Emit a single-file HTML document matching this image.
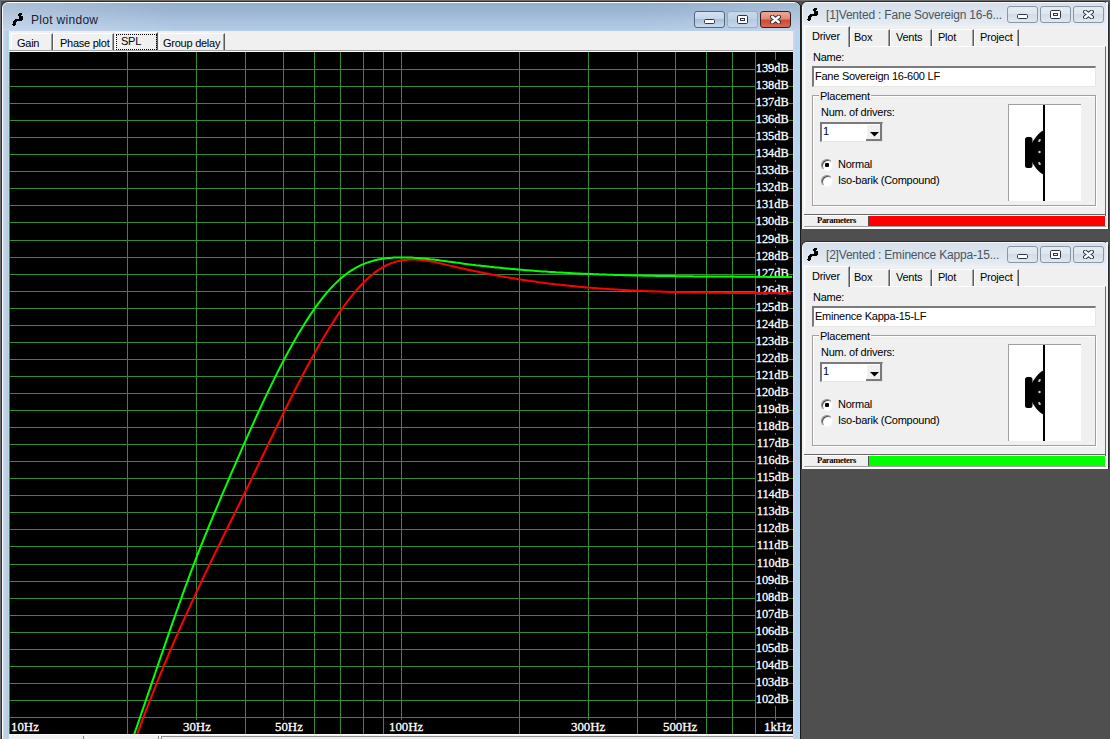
<!DOCTYPE html>
<html><head><meta charset="utf-8"><style>
html,body{margin:0;padding:0}
body{width:1110px;height:739px;position:relative;overflow:hidden;background:#4f4f4f;font-family:"Liberation Sans",sans-serif}
div{box-sizing:border-box}
.lb{position:absolute;font-family:"Liberation Serif",serif;font-size:13px;line-height:15px;color:#fff;white-space:nowrap;-webkit-text-stroke:0.3px #fff;transform:scaleX(0.95);transform-origin:0 0}
.lb.r{transform-origin:100% 0}
.lb.hz{transform:scaleX(0.99)}
.ttl{position:absolute;font-size:12px;line-height:16px;white-space:nowrap;letter-spacing:-0.15px}
.txt{position:absolute;font-size:11px;line-height:13px;color:#000;white-space:nowrap;letter-spacing:-0.25px}
.par{position:absolute;font-family:"Liberation Serif",serif;font-weight:bold;font-size:8.5px;letter-spacing:-0.3px;line-height:11px;color:#000;white-space:nowrap}
.tab{position:absolute;background:#f0f0f0;border-top:1px solid #fff;border-left:1px solid #fff;border-right:1px solid #5a5a5a;box-shadow:inset -1px 0 0 #a0a0a0}
.tab span{position:absolute;font-size:11px;line-height:13px;white-space:nowrap;color:#000;letter-spacing:-0.25px}
.tbtn{position:absolute;width:31px;height:17px;border:1px solid #56647a;border-radius:3px}
.tbtn.in{border-color:#8a96a6;background:linear-gradient(#e4ebf3,#dde5ee 50%,#d2dce8 50%,#dfe8f2)}
.gl{position:absolute}
.gmin{position:absolute;left:10px;top:8px;width:11px;height:5px;border:1px solid #333;border-radius:1px;background:#fff}
.gmax{position:absolute;left:10px;top:4px;width:11px;height:9px;border:2px solid #333;border-radius:1px;background:#fff;box-shadow:inset 0 0 0 2px #fff}
.gx{position:absolute;left:0;top:0;width:29px;text-align:center;font-size:11px;line-height:15px;color:#fff;text-shadow:0 0 1px #333,0 0 1px #333}
.radio{position:absolute;width:12px;height:12px;border-radius:50%;background:#fff;border:1px solid;border-color:#8a8a8a #f8f8f8 #f8f8f8 #8a8a8a;box-shadow:inset 1px 1px 0 #505050}
.radio .dot{position:absolute;left:3px;top:3px;width:4px;height:4px;border-radius:1px;background:#000}
</style></head><body>
<div style="position:absolute;left:0;top:0;width:1110px;height:1px;background:#6e6e6e"></div>
<div style="position:absolute;left:0;top:0;width:1px;height:739px;background:#6a6e78"></div>
<!-- left window -->
<div style="position:absolute;left:1px;top:1px;width:800px;height:760px;background:#2a2a2a;border-radius:7px 7px 0 0"></div>
<div style="position:absolute;left:2px;top:2px;width:798px;height:758px;background:#fff;border-radius:6px 6px 0 0"></div>
<div style="position:absolute;left:3px;top:3px;width:797px;height:757px;background:#bcd2ea;border-radius:5px 5px 0 0"></div>
<div style="position:absolute;left:3px;top:31px;width:6px;height:708px;background:linear-gradient(90deg,#c8dce4,#bcd0e6 40%,#b8ccec 80%,#aee4d8)"></div>
<div style="position:absolute;left:793px;top:31px;width:7px;height:708px;background:linear-gradient(90deg,#c8dcea,#c0d0ee 40%,#b4d4f2 70%,#a0e4f8)"></div>
<div style="position:absolute;left:3px;top:3px;width:797px;height:28px;background:linear-gradient(90deg,rgba(255,255,255,0.22),rgba(255,255,255,0) 22%,rgba(255,255,255,0) 80%,rgba(255,255,255,0.15)),linear-gradient(#93afcd,#9bb5d2 30%,#a6bed9 55%,#aec8e4 85%,#b8cde6);border-radius:5px 5px 0 0"></div>
<svg width="12" height="13" style="position:absolute;left:12px;top:13px" shape-rendering="crispEdges" fill="#000"><rect x="7" y="0" width="3" height="1"/><rect x="6" y="1" width="4" height="1"/><rect x="6" y="2" width="3" height="1"/><rect x="7" y="3" width="4" height="1"/><rect x="7" y="4" width="4" height="1"/><rect x="7" y="5" width="4" height="1"/><rect x="3" y="6" width="8" height="1"/><rect x="2" y="7" width="8" height="1"/><rect x="1" y="8" width="4" height="1"/><rect x="1" y="9" width="3" height="1"/><rect x="1" y="10" width="3" height="1"/><rect x="0" y="11" width="4" height="1"/><rect x="1" y="12" width="2" height="1"/></svg>
<div class="ttl" style="left:31px;top:12px;color:#1c2030;letter-spacing:0.3px">Plot window</div>
<div class="tbtn" style="left:694px;top:11px;background:linear-gradient(#d4e1f0,#c5d6ea 45%,#a9bfd8 50%,#c7daf0)"><svg class="gl" style="left:9px;top:7px" width="11" height="5"><rect x="0.5" y="0.5" width="10" height="4" rx="1" fill="#fff" stroke="#2e3440"/></svg></div>
<div class="tbtn" style="left:727px;top:11px;border-color:#98a8be;background:linear-gradient(#c8d8ea,#bfd1e6 50%,#b5c9e0 50%,#c5d9ee)"><svg class="gl" style="left:9px;top:3px" width="11" height="9"><rect x="0.5" y="0.5" width="10" height="8" rx="1.2" fill="#fff" stroke="#2e3440"/><rect x="3.5" y="3.5" width="4" height="2" fill="#fff" stroke="#2e3440"/></svg></div>
<div class="tbtn" style="left:760px;top:11px;border-color:#3a1a1a;background:linear-gradient(#eba898,#e08870 48%,#c94a32 52%,#d86a50)"><svg class="gl" style="left:9px;top:3px" width="11" height="9"><path d="M2.2 1.8 L8.8 7.2 M8.8 1.8 L2.2 7.2" stroke="#2e3440" stroke-width="4.4" stroke-linecap="round"/><path d="M2.2 1.8 L8.8 7.2 M8.8 1.8 L2.2 7.2" stroke="#fff" stroke-width="2.4" stroke-linecap="round"/></svg></div>
<div style="position:absolute;left:9px;top:31px;width:784px;height:708px;background:#f0f0f0"></div>
<div class="tab" style="left:11px;top:33px;width:42px;height:17px"><span style="left:5px;top:3px">Gain</span></div>
<div class="tab" style="left:53px;top:33px;width:61px;height:17px"><span style="left:6px;top:3px">Phase plot</span></div>
<div class="tab" style="left:115px;top:32px;width:43px;height:19px"><span style="left:5px;top:2px">SPL</span><div style="position:absolute;left:0;top:1px;width:41px;height:16px;border:1px dotted #000"></div></div>
<div class="tab" style="left:159px;top:33px;width:66px;height:17px"><span style="left:3px;top:3px">Group delay</span></div>
<div style="position:absolute;left:9px;top:50px;width:784px;height:1px;background:#a0a0a0"></div>
<div style="position:absolute;left:9px;top:51px;width:784px;height:1px;background:#fff"></div>
<svg width="1110" height="739" style="position:absolute;left:0;top:0" shape-rendering="crispEdges"><rect x="9" y="52" width="784" height="682" fill="#000"/><rect x="9" y="52" width="1" height="682" fill="#348c34"/><rect x="127" y="52" width="1" height="682" fill="#348c34"/><rect x="196" y="52" width="1" height="682" fill="#348c34"/><rect x="245" y="52" width="1" height="682" fill="#348c34"/><rect x="283" y="52" width="1" height="682" fill="#348c34"/><rect x="314" y="52" width="1" height="682" fill="#348c34"/><rect x="340" y="52" width="1" height="682" fill="#348c34"/><rect x="363" y="52" width="1" height="682" fill="#348c34"/><rect x="383" y="52" width="1" height="682" fill="#348c34"/><rect x="401" y="52" width="1" height="682" fill="#348c34"/><rect x="519" y="52" width="1" height="682" fill="#348c34"/><rect x="588" y="52" width="1" height="682" fill="#348c34"/><rect x="637" y="52" width="1" height="682" fill="#348c34"/><rect x="675" y="52" width="1" height="682" fill="#348c34"/><rect x="706" y="52" width="1" height="682" fill="#348c34"/><rect x="732" y="52" width="1" height="682" fill="#348c34"/><rect x="755" y="52" width="1" height="682" fill="#348c34"/><rect x="775" y="52" width="1" height="682" fill="#348c34"/><rect x="9" y="69" width="784" height="1" fill="#348c34"/><rect x="9" y="86" width="784" height="1" fill="#348c34"/><rect x="9" y="103" width="784" height="1" fill="#348c34"/><rect x="9" y="120" width="784" height="1" fill="#348c34"/><rect x="9" y="137" width="784" height="1" fill="#348c34"/><rect x="9" y="154" width="784" height="1" fill="#348c34"/><rect x="9" y="171" width="784" height="1" fill="#348c34"/><rect x="9" y="188" width="784" height="1" fill="#348c34"/><rect x="9" y="205" width="784" height="1" fill="#348c34"/><rect x="9" y="222" width="784" height="1" fill="#348c34"/><rect x="9" y="240" width="784" height="1" fill="#348c34"/><rect x="9" y="257" width="784" height="1" fill="#348c34"/><rect x="9" y="274" width="784" height="1" fill="#348c34"/><rect x="9" y="291" width="784" height="1" fill="#348c34"/><rect x="9" y="308" width="784" height="1" fill="#348c34"/><rect x="9" y="325" width="784" height="1" fill="#348c34"/><rect x="9" y="342" width="784" height="1" fill="#348c34"/><rect x="9" y="359" width="784" height="1" fill="#348c34"/><rect x="9" y="376" width="784" height="1" fill="#348c34"/><rect x="9" y="393" width="784" height="1" fill="#348c34"/><rect x="9" y="410" width="784" height="1" fill="#348c34"/><rect x="9" y="427" width="784" height="1" fill="#348c34"/><rect x="9" y="444" width="784" height="1" fill="#348c34"/><rect x="9" y="461" width="784" height="1" fill="#348c34"/><rect x="9" y="478" width="784" height="1" fill="#348c34"/><rect x="9" y="495" width="784" height="1" fill="#348c34"/><rect x="9" y="512" width="784" height="1" fill="#348c34"/><rect x="9" y="529" width="784" height="1" fill="#348c34"/><rect x="9" y="546" width="784" height="1" fill="#348c34"/><rect x="9" y="564" width="784" height="1" fill="#348c34"/><rect x="9" y="581" width="784" height="1" fill="#348c34"/><rect x="9" y="598" width="784" height="1" fill="#348c34"/><rect x="9" y="615" width="784" height="1" fill="#348c34"/><rect x="9" y="632" width="784" height="1" fill="#348c34"/><rect x="9" y="649" width="784" height="1" fill="#348c34"/><rect x="9" y="666" width="784" height="1" fill="#348c34"/><rect x="9" y="683" width="784" height="1" fill="#348c34"/><rect x="9" y="700" width="784" height="1" fill="#348c34"/><rect x="9" y="717" width="784" height="1" fill="#348c34"/><rect x="756" y="60" width="33" height="15" fill="#000"/><rect x="756" y="77" width="33" height="15" fill="#000"/><rect x="756" y="94" width="33" height="15" fill="#000"/><rect x="756" y="111" width="33" height="15" fill="#000"/><rect x="756" y="128" width="33" height="15" fill="#000"/><rect x="756" y="145" width="33" height="15" fill="#000"/><rect x="756" y="162" width="33" height="15" fill="#000"/><rect x="756" y="179" width="33" height="15" fill="#000"/><rect x="756" y="196" width="33" height="15" fill="#000"/><rect x="756" y="213" width="33" height="15" fill="#000"/><rect x="756" y="231" width="33" height="15" fill="#000"/><rect x="756" y="248" width="33" height="15" fill="#000"/><rect x="756" y="265" width="33" height="15" fill="#000"/><rect x="756" y="282" width="33" height="15" fill="#000"/><rect x="756" y="299" width="33" height="15" fill="#000"/><rect x="756" y="316" width="33" height="15" fill="#000"/><rect x="756" y="333" width="33" height="15" fill="#000"/><rect x="756" y="350" width="33" height="15" fill="#000"/><rect x="756" y="367" width="33" height="15" fill="#000"/><rect x="756" y="384" width="33" height="15" fill="#000"/><rect x="756" y="401" width="33" height="15" fill="#000"/><rect x="756" y="418" width="33" height="15" fill="#000"/><rect x="756" y="435" width="33" height="15" fill="#000"/><rect x="756" y="452" width="33" height="15" fill="#000"/><rect x="756" y="469" width="33" height="15" fill="#000"/><rect x="756" y="486" width="33" height="15" fill="#000"/><rect x="756" y="503" width="33" height="15" fill="#000"/><rect x="756" y="520" width="33" height="15" fill="#000"/><rect x="756" y="537" width="33" height="15" fill="#000"/><rect x="756" y="555" width="33" height="15" fill="#000"/><rect x="756" y="572" width="33" height="15" fill="#000"/><rect x="756" y="589" width="33" height="15" fill="#000"/><rect x="756" y="606" width="33" height="15" fill="#000"/><rect x="756" y="623" width="33" height="15" fill="#000"/><rect x="756" y="640" width="33" height="15" fill="#000"/><rect x="756" y="657" width="33" height="15" fill="#000"/><rect x="756" y="674" width="33" height="15" fill="#000"/><rect x="756" y="691" width="33" height="15" fill="#000"/><rect x="10" y="720" width="28" height="14" fill="#000"/><rect x="183" y="720" width="28" height="14" fill="#000"/><rect x="274" y="720" width="28" height="14" fill="#000"/><rect x="388" y="720" width="34" height="14" fill="#000"/><rect x="570" y="720" width="34" height="14" fill="#000"/><rect x="662" y="720" width="34" height="14" fill="#000"/><rect x="763" y="720" width="28" height="14" fill="#000"/></svg>
<div class="lb r" style="top:60px;right:321px">139dB</div><div class="lb r" style="top:77px;right:321px">138dB</div><div class="lb r" style="top:94px;right:321px">137dB</div><div class="lb r" style="top:111px;right:321px">136dB</div><div class="lb r" style="top:128px;right:321px">135dB</div><div class="lb r" style="top:145px;right:321px">134dB</div><div class="lb r" style="top:162px;right:321px">133dB</div><div class="lb r" style="top:179px;right:321px">132dB</div><div class="lb r" style="top:196px;right:321px">131dB</div><div class="lb r" style="top:213px;right:321px">130dB</div><div class="lb r" style="top:231px;right:321px">129dB</div><div class="lb r" style="top:248px;right:321px">128dB</div><div class="lb r" style="top:265px;right:321px">127dB</div><div class="lb r" style="top:282px;right:321px">126dB</div><div class="lb r" style="top:299px;right:321px">125dB</div><div class="lb r" style="top:316px;right:321px">124dB</div><div class="lb r" style="top:333px;right:321px">123dB</div><div class="lb r" style="top:350px;right:321px">122dB</div><div class="lb r" style="top:367px;right:321px">121dB</div><div class="lb r" style="top:384px;right:321px">120dB</div><div class="lb r" style="top:401px;right:321px">119dB</div><div class="lb r" style="top:418px;right:321px">118dB</div><div class="lb r" style="top:435px;right:321px">117dB</div><div class="lb r" style="top:452px;right:321px">116dB</div><div class="lb r" style="top:469px;right:321px">115dB</div><div class="lb r" style="top:486px;right:321px">114dB</div><div class="lb r" style="top:503px;right:321px">113dB</div><div class="lb r" style="top:520px;right:321px">112dB</div><div class="lb r" style="top:537px;right:321px">111dB</div><div class="lb r" style="top:555px;right:321px">110dB</div><div class="lb r" style="top:572px;right:321px">109dB</div><div class="lb r" style="top:589px;right:321px">108dB</div><div class="lb r" style="top:606px;right:321px">107dB</div><div class="lb r" style="top:623px;right:321px">106dB</div><div class="lb r" style="top:640px;right:321px">105dB</div><div class="lb r" style="top:657px;right:321px">104dB</div><div class="lb r" style="top:674px;right:321px">103dB</div><div class="lb r" style="top:691px;right:321px">102dB</div><div class="lb hz" style="top:719px;left:11.0px">10Hz</div><div class="lb hz" style="top:719px;left:183.3px">30Hz</div><div class="lb hz" style="top:719px;left:274.5px">50Hz</div><div class="lb hz" style="top:719px;left:388.8px">100Hz</div><div class="lb hz" style="top:719px;left:570.5px">300Hz</div><div class="lb hz" style="top:719px;left:662.6px">500Hz</div><div class="lb hz" style="top:719px;left:763.8px">1kHz</div>
<svg width="1110" height="739" style="position:absolute;left:0;top:0">
<defs><clipPath id="pc"><rect x="9" y="52" width="784" height="682"/></clipPath></defs>
<g clip-path="url(#pc)" fill="none" stroke-width="2" stroke-linejoin="round">
<polyline points="135.0,740.3 137.0,734.8 139.0,729.3 141.0,723.9 143.0,718.5 145.0,713.2 147.0,708.0 149.0,702.8 151.0,697.7 153.0,692.6 155.0,687.5 157.0,682.5 159.0,677.6 161.0,672.7 163.0,667.8 165.0,663.0 167.0,658.3 169.0,653.5 171.0,648.9 173.0,644.2 175.0,639.6 177.0,635.0 179.0,630.5 181.0,626.0 183.0,621.5 185.0,617.1 187.0,612.7 189.0,608.3 191.0,603.9 193.0,599.6 195.0,595.3 197.0,591.0 199.0,586.8 201.0,582.5 203.0,578.3 205.0,574.1 207.0,569.9 209.0,565.8 211.0,561.6 213.0,557.5 215.0,553.4 217.0,549.3 219.0,545.2 221.0,541.1 223.0,537.0 225.0,532.9 227.0,528.8 229.0,524.8 231.0,520.7 233.0,516.7 235.0,512.6 237.0,508.5 239.0,504.5 241.0,500.4 243.0,496.3 245.0,492.3 247.0,488.2 249.0,484.1 251.0,480.0 253.0,475.9 255.0,471.8 257.0,467.6 259.0,463.5 261.0,459.4 263.0,455.2 265.0,451.1 267.0,446.9 269.0,442.8 271.0,438.7 273.0,434.5 275.0,430.4 277.0,426.3 279.0,422.2 281.0,418.1 283.0,414.0 285.0,410.0 287.0,406.0 289.0,401.9 291.0,397.9 293.0,394.0 295.0,390.0 297.0,386.1 299.0,382.2 301.0,378.4 303.0,374.5 305.0,370.7 307.0,367.0 309.0,363.3 311.0,359.6 313.0,355.9 315.0,352.3 317.0,348.8 319.0,345.3 321.0,341.8 323.0,338.4 325.0,335.1 327.0,331.8 329.0,328.5 331.0,325.3 333.0,322.2 335.0,319.1 337.0,316.1 339.0,313.1 341.0,310.2 343.0,307.4 345.0,304.6 347.0,302.0 349.0,299.3 351.0,296.8 353.0,294.3 355.0,291.9 357.0,289.6 359.0,287.3 361.0,285.2 363.0,283.1 365.0,281.1 367.0,279.2 369.0,277.3 371.0,275.6 373.0,274.0 375.0,272.4 377.0,270.9 379.0,269.5 381.0,268.3 383.0,267.1 385.0,266.0 387.0,265.0 389.0,264.1 391.0,263.3 393.0,262.6 395.0,262.0 397.0,261.4 399.0,260.9 401.0,260.5 403.0,260.2 405.0,259.9 407.0,259.8 409.0,259.6 411.0,259.6 413.0,259.5 415.0,259.6 417.0,259.7 419.0,259.8 421.0,260.0 423.0,260.2 425.0,260.5 427.0,260.8 429.0,261.1 431.0,261.4 433.0,261.8 435.0,262.2 437.0,262.6 439.0,263.1 441.0,263.5 443.0,264.0 445.0,264.5 447.0,264.9 449.0,265.4 451.0,265.9 453.0,266.3 455.0,266.8 457.0,267.3 459.0,267.7 461.0,268.2 463.0,268.6 465.0,269.0 467.0,269.5 469.0,269.9 471.0,270.3 473.0,270.8 475.0,271.2 477.0,271.6 479.0,272.0 481.0,272.4 483.0,272.8 485.0,273.2 487.0,273.6 489.0,274.0 491.0,274.4 493.0,274.8 495.0,275.1 497.0,275.5 499.0,275.9 501.0,276.2 503.0,276.6 505.0,276.9 507.0,277.3 509.0,277.6 511.0,278.0 513.0,278.3 515.0,278.6 517.0,278.9 519.0,279.3 521.0,279.6 523.0,279.9 525.0,280.2 527.0,280.5 529.0,280.8 531.0,281.1 533.0,281.3 535.0,281.6 537.0,281.9 539.0,282.2 541.0,282.4 543.0,282.7 545.0,283.0 547.0,283.2 549.0,283.5 551.0,283.7 553.0,283.9 555.0,284.2 557.0,284.4 559.0,284.6 561.0,284.9 563.0,285.1 565.0,285.3 567.0,285.5 569.0,285.7 571.0,285.9 573.0,286.1 575.0,286.3 577.0,286.5 579.0,286.7 581.0,286.9 583.0,287.0 585.0,287.2 587.0,287.4 589.0,287.6 591.0,287.7 593.0,287.9 595.0,288.0 597.0,288.2 599.0,288.4 601.0,288.5 603.0,288.7 605.0,288.8 607.0,288.9 609.0,289.1 611.0,289.2 613.0,289.3 615.0,289.5 617.0,289.6 619.0,289.7 621.0,289.8 623.0,289.9 625.0,290.0 627.0,290.2 629.0,290.3 631.0,290.4 633.0,290.5 635.0,290.6 637.0,290.7 639.0,290.7 641.0,290.8 643.0,290.9 645.0,291.0 647.0,291.1 649.0,291.2 651.0,291.3 653.0,291.3 655.0,291.4 657.0,291.5 659.0,291.5 661.0,291.6 663.0,291.7 665.0,291.7 667.0,291.8 669.0,291.9 671.0,291.9 673.0,292.0 675.0,292.0 677.0,292.1 679.0,292.1 681.0,292.2 683.0,292.2 685.0,292.3 687.0,292.3 689.0,292.3 691.0,292.4 693.0,292.4 695.0,292.5 697.0,292.5 699.0,292.5 701.0,292.6 703.0,292.6 705.0,292.6 707.0,292.6 709.0,292.7 711.0,292.7 713.0,292.7 715.0,292.7 717.0,292.8 719.0,292.8 721.0,292.8 723.0,292.8 725.0,292.8 727.0,292.9 729.0,292.9 731.0,292.9 733.0,292.9 735.0,292.9 737.0,292.9 739.0,293.0 741.0,293.0 743.0,293.0 745.0,293.0 747.0,293.0 749.0,293.0 751.0,293.0 753.0,293.0 755.0,293.0 757.0,293.1 759.0,293.1 761.0,293.1 763.0,293.1 765.0,293.1 767.0,293.1 769.0,293.1 771.0,293.1 773.0,293.1 775.0,293.1 777.0,293.1 779.0,293.2 781.0,293.2 783.0,293.2 785.0,293.2 787.0,293.2 789.0,293.2 791.0,293.2" stroke="#ff0000"/>
<polyline points="132.0,740.6 134.0,734.8 136.0,729.1 138.0,723.3 140.0,717.5 142.0,711.7 144.0,705.8 146.0,700.0 148.0,694.1 150.0,688.3 152.0,682.4 154.0,676.6 156.0,670.7 158.0,664.9 160.0,659.0 162.0,653.2 164.0,647.4 166.0,641.6 168.0,635.9 170.0,630.1 172.0,624.4 174.0,618.7 176.0,613.0 178.0,607.4 180.0,601.8 182.0,596.2 184.0,590.7 186.0,585.2 188.0,579.8 190.0,574.4 192.0,569.1 194.0,563.8 196.0,558.6 198.0,553.4 200.0,548.3 202.0,543.3 204.0,538.3 206.0,533.3 208.0,528.5 210.0,523.6 212.0,518.8 214.0,514.0 216.0,509.3 218.0,504.6 220.0,499.8 222.0,495.1 224.0,490.4 226.0,485.8 228.0,481.1 230.0,476.4 232.0,471.7 234.0,467.1 236.0,462.5 238.0,457.9 240.0,453.3 242.0,448.7 244.0,444.1 246.0,439.6 248.0,435.1 250.0,430.6 252.0,426.2 254.0,421.8 256.0,417.4 258.0,413.0 260.0,408.7 262.0,404.4 264.0,400.1 266.0,395.9 268.0,391.7 270.0,387.6 272.0,383.5 274.0,379.4 276.0,375.4 278.0,371.4 280.0,367.5 282.0,363.6 284.0,359.8 286.0,356.0 288.0,352.3 290.0,348.7 292.0,345.1 294.0,341.5 296.0,338.0 298.0,334.6 300.0,331.2 302.0,327.9 304.0,324.7 306.0,321.5 308.0,318.4 310.0,315.4 312.0,312.4 314.0,309.5 316.0,306.7 318.0,303.9 320.0,301.3 322.0,298.7 324.0,296.2 326.0,293.7 328.0,291.4 330.0,289.1 332.0,287.0 334.0,284.9 336.0,282.9 338.0,281.0 340.0,279.1 342.0,277.4 344.0,275.8 346.0,274.2 348.0,272.7 350.0,271.4 352.0,270.1 354.0,268.8 356.0,267.7 358.0,266.6 360.0,265.6 362.0,264.7 364.0,263.9 366.0,263.1 368.0,262.4 370.0,261.7 372.0,261.1 374.0,260.5 376.0,260.0 378.0,259.6 380.0,259.2 382.0,258.8 384.0,258.5 386.0,258.3 388.0,258.0 390.0,257.9 392.0,257.7 394.0,257.6 396.0,257.5 398.0,257.4 400.0,257.4 402.0,257.4 404.0,257.4 406.0,257.4 408.0,257.5 410.0,257.6 412.0,257.6 414.0,257.8 416.0,257.9 418.0,258.0 420.0,258.2 422.0,258.4 424.0,258.5 426.0,258.7 428.0,258.9 430.0,259.2 432.0,259.4 434.0,259.6 436.0,259.9 438.0,260.1 440.0,260.4 442.0,260.7 444.0,260.9 446.0,261.2 448.0,261.5 450.0,261.7 452.0,262.0 454.0,262.3 456.0,262.6 458.0,262.8 460.0,263.1 462.0,263.4 464.0,263.7 466.0,263.9 468.0,264.2 470.0,264.4 472.0,264.7 474.0,264.9 476.0,265.2 478.0,265.4 480.0,265.6 482.0,265.9 484.0,266.1 486.0,266.3 488.0,266.5 490.0,266.8 492.0,267.0 494.0,267.2 496.0,267.4 498.0,267.6 500.0,267.8 502.0,268.0 504.0,268.2 506.0,268.4 508.0,268.6 510.0,268.8 512.0,269.0 514.0,269.1 516.0,269.3 518.0,269.5 520.0,269.7 522.0,269.8 524.0,270.0 526.0,270.2 528.0,270.3 530.0,270.5 532.0,270.6 534.0,270.8 536.0,270.9 538.0,271.1 540.0,271.2 542.0,271.4 544.0,271.5 546.0,271.6 548.0,271.8 550.0,271.9 552.0,272.0 554.0,272.1 556.0,272.3 558.0,272.4 560.0,272.5 562.0,272.6 564.0,272.7 566.0,272.8 568.0,273.0 570.0,273.1 572.0,273.2 574.0,273.3 576.0,273.4 578.0,273.5 580.0,273.6 582.0,273.7 584.0,273.7 586.0,273.8 588.0,273.9 590.0,274.0 592.0,274.1 594.0,274.2 596.0,274.3 598.0,274.3 600.0,274.4 602.0,274.5 604.0,274.6 606.0,274.6 608.0,274.7 610.0,274.8 612.0,274.8 614.0,274.9 616.0,274.9 618.0,275.0 620.0,275.1 622.0,275.1 624.0,275.2 626.0,275.2 628.0,275.3 630.0,275.3 632.0,275.4 634.0,275.4 636.0,275.5 638.0,275.5 640.0,275.6 642.0,275.6 644.0,275.7 646.0,275.7 648.0,275.7 650.0,275.8 652.0,275.8 654.0,275.8 656.0,275.9 658.0,275.9 660.0,275.9 662.0,276.0 664.0,276.0 666.0,276.0 668.0,276.1 670.0,276.1 672.0,276.1 674.0,276.1 676.0,276.2 678.0,276.2 680.0,276.2 682.0,276.2 684.0,276.3 686.0,276.3 688.0,276.3 690.0,276.3 692.0,276.3 694.0,276.4 696.0,276.4 698.0,276.4 700.0,276.4 702.0,276.4 704.0,276.4 706.0,276.5 708.0,276.5 710.0,276.5 712.0,276.5 714.0,276.5 716.0,276.5 718.0,276.5 720.0,276.6 722.0,276.6 724.0,276.6 726.0,276.6 728.0,276.6 730.0,276.6 732.0,276.6 734.0,276.6 736.0,276.7 738.0,276.7 740.0,276.7 742.0,276.7 744.0,276.7 746.0,276.7 748.0,276.7 750.0,276.7 752.0,276.8 754.0,276.8 756.0,276.8 758.0,276.8 760.0,276.8 762.0,276.8 764.0,276.8 766.0,276.8 768.0,276.9 770.0,276.9 772.0,276.9 774.0,276.9 776.0,276.9 778.0,276.9 780.0,277.0 782.0,277.0 784.0,277.0 786.0,277.0 788.0,277.0 790.0,277.1 792.0,277.1" stroke="#00ff00"/>
</g></svg>
<div style="position:absolute;left:9px;top:734px;width:784px;height:1px;background:#fff"></div>
<div style="position:absolute;left:83px;top:736px;width:1px;height:3px;background:#888"></div>
<div style="position:absolute;left:86px;top:736px;width:1px;height:3px;background:#fff"></div>
<div style="position:absolute;left:158px;top:736px;width:1px;height:3px;background:#888"></div>
<div style="position:absolute;left:161px;top:736px;width:632px;height:3px;border-top:1px solid #909090;border-left:1px solid #909090"></div>
<div style="position:absolute;left:800px;top:5px;width:1px;height:734px;background:#1a1a1a"></div>

<div style="position:absolute;left:801px;top:1px;width:308px;height:228px;background:#2a2a2a;border-radius:6px 6px 0 0"></div>
<div style="position:absolute;left:802px;top:2px;width:306px;height:227px;background:#f6f8fb;border-radius:5px 5px 0 0"></div>
<div style="position:absolute;left:803px;top:3px;width:304px;height:226px;background:#e4eaf1;border-radius:4px 4px 0 0"></div>
<div style="position:absolute;left:803px;top:3px;width:304px;height:23px;background:linear-gradient(#d7e0ea,#dce4ee 50%,#e3eaf2 85%,#eaf0f6);border-radius:4px 4px 0 0"></div>
<svg width="12" height="13" style="position:absolute;left:807px;top:8px" shape-rendering="crispEdges" fill="#000"><rect x="7" y="0" width="3" height="1"/><rect x="6" y="1" width="4" height="1"/><rect x="6" y="2" width="3" height="1"/><rect x="7" y="3" width="4" height="1"/><rect x="7" y="4" width="4" height="1"/><rect x="7" y="5" width="4" height="1"/><rect x="3" y="6" width="8" height="1"/><rect x="2" y="7" width="8" height="1"/><rect x="1" y="8" width="4" height="1"/><rect x="1" y="9" width="3" height="1"/><rect x="1" y="10" width="3" height="1"/><rect x="0" y="11" width="4" height="1"/><rect x="1" y="12" width="2" height="1"/></svg>
<div class="ttl" style="left:826px;top:7px;color:#4a5562;letter-spacing:-0.2px">[1]Vented : Fane Sovereign 16-6...</div>
<div class="tbtn in" style="left:1007px;top:6px"><svg class="gl" style="left:9px;top:7px" width="11" height="5"><rect x="0.5" y="0.5" width="10" height="4" rx="1" fill="#fff" stroke="#2e3440"/></svg></div>
<div class="tbtn in" style="left:1040px;top:6px"><svg class="gl" style="left:9px;top:3px" width="11" height="9"><rect x="0.5" y="0.5" width="10" height="8" rx="1.2" fill="#fff" stroke="#2e3440"/><rect x="3.5" y="3.5" width="4" height="2" fill="#fff" stroke="#2e3440"/></svg></div>
<div class="tbtn in" style="left:1073px;top:6px"><svg class="gl" style="left:9px;top:3px" width="11" height="9"><path d="M2.2 1.8 L8.8 7.2 M8.8 1.8 L2.2 7.2" stroke="#2e3440" stroke-width="4.4" stroke-linecap="round"/><path d="M2.2 1.8 L8.8 7.2 M8.8 1.8 L2.2 7.2" stroke="#fff" stroke-width="2.4" stroke-linecap="round"/></svg></div>
<div style="position:absolute;left:804px;top:26px;width:302px;height:203px;background:#f0f0f0"></div>
<div style="position:absolute;left:1106px;top:2px;width:2px;height:227px;background:#eef2f6"></div>
<div style="position:absolute;left:802px;top:26px;width:2px;height:203px;background:#eef2f6"></div>
<div style="position:absolute;left:802px;top:227px;width:306px;height:2px;background:#fafafa"></div>
<!-- tab page -->
<div style="position:absolute;left:804px;top:46px;width:301px;height:168px;border-top:1px solid #fff;border-left:1px solid #fff;border-right:1px solid #696969;border-bottom:1px solid #696969;box-sizing:border-box;width:302px;height:170px"></div>
<div class="tab sel" style="left:804px;top:26px;width:46px;height:21px"><span style="left:7px;top:3px">Driver</span></div>
<div class="tab" style="left:850px;top:29px;width:40px;height:17px"><span style="left:3px;top:1px">Box</span></div>
<div class="tab" style="left:890px;top:29px;width:42px;height:17px"><span style="left:5px;top:1px">Vents</span></div>
<div class="tab" style="left:932px;top:29px;width:42px;height:17px"><span style="left:5px;top:1px">Plot</span></div>
<div class="tab" style="left:974px;top:29px;width:45px;height:17px"><span style="left:5px;top:1px">Project</span></div>
<div class="txt" style="left:813px;top:51px">Name:</div>
<div style="position:absolute;left:812px;top:66px;width:284px;height:21px;background:#fff;border-top:2px solid #7a7a7a;border-left:2px solid #7a7a7a;border-right:1px solid #e6e6e6;border-bottom:1px solid #e6e6e6;box-sizing:border-box"></div>
<div class="txt" style="left:815px;top:70px">Fane Sovereign 16-600 LF</div>
<div style="position:absolute;left:812px;top:95px;width:284px;height:111px;border:1px solid #a0a0a0;box-shadow:inset 1px 1px 0 #fff,1px 1px 0 #fff;box-sizing:border-box"></div>
<div class="txt" style="left:819px;top:90px;background:#f0f0f0;padding:0 1px">Placement</div>
<div class="txt" style="left:821px;top:106px">Num. of drivers:</div>
<div style="position:absolute;left:820px;top:122px;width:63px;height:20px;background:#fff;border-top:2px solid #7a7a7a;border-left:2px solid #7a7a7a;border-right:1px solid #e6e6e6;border-bottom:1px solid #e6e6e6;box-sizing:border-box"></div>
<div style="position:absolute;left:866px;top:124px;width:16px;height:17px;background:#f0f0f0;border-right:2px solid #7a7a7a;border-bottom:2px solid #7a7a7a;box-shadow:inset 1px 1px 0 #fff;box-sizing:border-box"></div>
<svg width="9" height="5" style="position:absolute;left:870px;top:132px"><path d="M0 0H9L4.5 4.5Z" fill="#000"/></svg>
<div class="txt" style="left:823px;top:125px">1</div>
<div class="radio" style="left:821px;top:159px"><div class="dot"></div></div>
<div class="txt" style="left:838px;top:158px">Normal</div>
<div class="radio" style="left:821px;top:175px"></div>
<div class="txt" style="left:838px;top:174px">Iso-barik (Compound)</div>
<div style="position:absolute;left:1008px;top:104px;width:73px;height:97px;background:#fff;border-top:1px solid #a0a0a0;border-left:1px solid #a0a0a0;box-sizing:border-box"></div>
<svg width="73" height="97" style="position:absolute;left:1008px;top:104px">
<rect x="35" y="1" width="2" height="96" fill="#000"/>
<rect x="17" y="33" width="7.5" height="31" rx="2.5" fill="#000"/>
<path d="M23 41 C26 35 30 29 36 26 L36 71 C30 68 26 62 23 56 Z" fill="#000"/>
<ellipse cx="31.5" cy="36.5" rx="1.1" ry="1.6" fill="#d0d0d0" transform="rotate(30 31.5 36.5)"/>
<ellipse cx="31.5" cy="48" rx="1.2" ry="1.2" fill="#d0d0d0"/>
<ellipse cx="31.5" cy="59.5" rx="1.1" ry="1.6" fill="#d0d0d0" transform="rotate(-30 31.5 59.5)"/>
</svg>
<!-- status -->
<div style="position:absolute;left:804px;top:214px;width:302px;height:1px;background:#696969"></div>
<div style="position:absolute;left:804px;top:215px;width:64px;height:11px;background:#f0f0f0;border-top:1px solid #fff;box-sizing:border-box"></div>
<div class="par" style="left:817px;top:215px">Parameters</div>
<div style="position:absolute;left:868px;top:215px;width:237px;height:1px;background:#fff"></div>
<div style="position:absolute;left:868px;top:216px;width:237px;height:10px;background:#ff0000;border-left:1px solid #505050"></div>
<div style="position:absolute;left:804px;top:226px;width:302px;height:1px;background:#a0a0a0"></div>


<div style="position:absolute;left:801px;top:241px;width:308px;height:228px;background:#2a2a2a;border-radius:6px 6px 0 0"></div>
<div style="position:absolute;left:802px;top:242px;width:306px;height:227px;background:#f6f8fb;border-radius:5px 5px 0 0"></div>
<div style="position:absolute;left:803px;top:243px;width:304px;height:226px;background:#e4eaf1;border-radius:4px 4px 0 0"></div>
<div style="position:absolute;left:803px;top:243px;width:304px;height:23px;background:linear-gradient(#d7e0ea,#dce4ee 50%,#e3eaf2 85%,#eaf0f6);border-radius:4px 4px 0 0"></div>
<svg width="12" height="13" style="position:absolute;left:807px;top:248px" shape-rendering="crispEdges" fill="#000"><rect x="7" y="0" width="3" height="1"/><rect x="6" y="1" width="4" height="1"/><rect x="6" y="2" width="3" height="1"/><rect x="7" y="3" width="4" height="1"/><rect x="7" y="4" width="4" height="1"/><rect x="7" y="5" width="4" height="1"/><rect x="3" y="6" width="8" height="1"/><rect x="2" y="7" width="8" height="1"/><rect x="1" y="8" width="4" height="1"/><rect x="1" y="9" width="3" height="1"/><rect x="1" y="10" width="3" height="1"/><rect x="0" y="11" width="4" height="1"/><rect x="1" y="12" width="2" height="1"/></svg>
<div class="ttl" style="left:826px;top:247px;color:#4a5562;letter-spacing:-0.2px">[2]Vented : Eminence Kappa-15...</div>
<div class="tbtn in" style="left:1007px;top:246px"><svg class="gl" style="left:9px;top:7px" width="11" height="5"><rect x="0.5" y="0.5" width="10" height="4" rx="1" fill="#fff" stroke="#2e3440"/></svg></div>
<div class="tbtn in" style="left:1040px;top:246px"><svg class="gl" style="left:9px;top:3px" width="11" height="9"><rect x="0.5" y="0.5" width="10" height="8" rx="1.2" fill="#fff" stroke="#2e3440"/><rect x="3.5" y="3.5" width="4" height="2" fill="#fff" stroke="#2e3440"/></svg></div>
<div class="tbtn in" style="left:1073px;top:246px"><svg class="gl" style="left:9px;top:3px" width="11" height="9"><path d="M2.2 1.8 L8.8 7.2 M8.8 1.8 L2.2 7.2" stroke="#2e3440" stroke-width="4.4" stroke-linecap="round"/><path d="M2.2 1.8 L8.8 7.2 M8.8 1.8 L2.2 7.2" stroke="#fff" stroke-width="2.4" stroke-linecap="round"/></svg></div>
<div style="position:absolute;left:804px;top:266px;width:302px;height:203px;background:#f0f0f0"></div>
<div style="position:absolute;left:1106px;top:242px;width:2px;height:227px;background:#eef2f6"></div>
<div style="position:absolute;left:802px;top:266px;width:2px;height:203px;background:#eef2f6"></div>
<div style="position:absolute;left:802px;top:467px;width:306px;height:2px;background:#fafafa"></div>
<!-- tab page -->
<div style="position:absolute;left:804px;top:286px;width:301px;height:168px;border-top:1px solid #fff;border-left:1px solid #fff;border-right:1px solid #696969;border-bottom:1px solid #696969;box-sizing:border-box;width:302px;height:170px"></div>
<div class="tab sel" style="left:804px;top:266px;width:46px;height:21px"><span style="left:7px;top:3px">Driver</span></div>
<div class="tab" style="left:850px;top:269px;width:40px;height:17px"><span style="left:3px;top:1px">Box</span></div>
<div class="tab" style="left:890px;top:269px;width:42px;height:17px"><span style="left:5px;top:1px">Vents</span></div>
<div class="tab" style="left:932px;top:269px;width:42px;height:17px"><span style="left:5px;top:1px">Plot</span></div>
<div class="tab" style="left:974px;top:269px;width:45px;height:17px"><span style="left:5px;top:1px">Project</span></div>
<div class="txt" style="left:813px;top:291px">Name:</div>
<div style="position:absolute;left:812px;top:306px;width:284px;height:21px;background:#fff;border-top:2px solid #7a7a7a;border-left:2px solid #7a7a7a;border-right:1px solid #e6e6e6;border-bottom:1px solid #e6e6e6;box-sizing:border-box"></div>
<div class="txt" style="left:815px;top:310px">Eminence Kappa-15-LF</div>
<div style="position:absolute;left:812px;top:335px;width:284px;height:111px;border:1px solid #a0a0a0;box-shadow:inset 1px 1px 0 #fff,1px 1px 0 #fff;box-sizing:border-box"></div>
<div class="txt" style="left:819px;top:330px;background:#f0f0f0;padding:0 1px">Placement</div>
<div class="txt" style="left:821px;top:346px">Num. of drivers:</div>
<div style="position:absolute;left:820px;top:362px;width:63px;height:20px;background:#fff;border-top:2px solid #7a7a7a;border-left:2px solid #7a7a7a;border-right:1px solid #e6e6e6;border-bottom:1px solid #e6e6e6;box-sizing:border-box"></div>
<div style="position:absolute;left:866px;top:364px;width:16px;height:17px;background:#f0f0f0;border-right:2px solid #7a7a7a;border-bottom:2px solid #7a7a7a;box-shadow:inset 1px 1px 0 #fff;box-sizing:border-box"></div>
<svg width="9" height="5" style="position:absolute;left:870px;top:372px"><path d="M0 0H9L4.5 4.5Z" fill="#000"/></svg>
<div class="txt" style="left:823px;top:365px">1</div>
<div class="radio" style="left:821px;top:399px"><div class="dot"></div></div>
<div class="txt" style="left:838px;top:398px">Normal</div>
<div class="radio" style="left:821px;top:415px"></div>
<div class="txt" style="left:838px;top:414px">Iso-barik (Compound)</div>
<div style="position:absolute;left:1008px;top:344px;width:73px;height:97px;background:#fff;border-top:1px solid #a0a0a0;border-left:1px solid #a0a0a0;box-sizing:border-box"></div>
<svg width="73" height="97" style="position:absolute;left:1008px;top:344px">
<rect x="35" y="1" width="2" height="96" fill="#000"/>
<rect x="17" y="33" width="7.5" height="31" rx="2.5" fill="#000"/>
<path d="M23 41 C26 35 30 29 36 26 L36 71 C30 68 26 62 23 56 Z" fill="#000"/>
<ellipse cx="31.5" cy="36.5" rx="1.1" ry="1.6" fill="#d0d0d0" transform="rotate(30 31.5 36.5)"/>
<ellipse cx="31.5" cy="48" rx="1.2" ry="1.2" fill="#d0d0d0"/>
<ellipse cx="31.5" cy="59.5" rx="1.1" ry="1.6" fill="#d0d0d0" transform="rotate(-30 31.5 59.5)"/>
</svg>
<!-- status -->
<div style="position:absolute;left:804px;top:454px;width:302px;height:1px;background:#696969"></div>
<div style="position:absolute;left:804px;top:455px;width:64px;height:11px;background:#f0f0f0;border-top:1px solid #fff;box-sizing:border-box"></div>
<div class="par" style="left:817px;top:455px">Parameters</div>
<div style="position:absolute;left:868px;top:455px;width:237px;height:1px;background:#fff"></div>
<div style="position:absolute;left:868px;top:456px;width:237px;height:10px;background:#00ff00;border-left:1px solid #505050"></div>
<div style="position:absolute;left:804px;top:466px;width:302px;height:1px;background:#a0a0a0"></div>

</body></html>
